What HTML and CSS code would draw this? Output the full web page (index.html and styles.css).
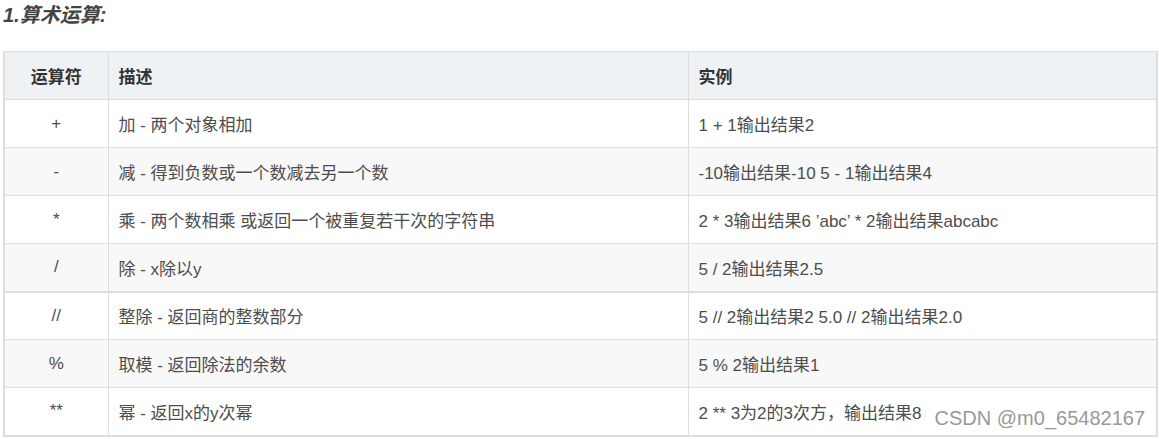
FILE: index.html
```html
<!DOCTYPE html>
<html lang="zh">
<head>
<meta charset="utf-8">
<link rel="stylesheet" href="styles.css">
</head>
<body>
<div class="page">
  <h3 class="title">1.算术运算:</h3>
  <table class="ops">
    <colgroup>
      <col class="c1"><col class="c2"><col class="c3">
    </colgroup>
    <thead>
      <tr><th class="center">运算符</th><th>描述</th><th>实例</th></tr>
    </thead>
    <tbody>
      <tr><td class="center">+</td><td>加 - 两个对象相加</td><td>1 + 1输出结果2</td></tr>
      <tr><td class="center">-</td><td>减 - 得到负数或一个数减去另一个数</td><td>-10输出结果-10 5 - 1输出结果4</td></tr>
      <tr><td class="center">*</td><td>乘 - 两个数相乘 或返回一个被重复若干次的字符串</td><td>2 * 3输出结果6 ’abc’ * 2输出结果abcabc</td></tr>
      <tr class="thick"><td class="center">/</td><td>除 - x除以y</td><td>5 / 2输出结果2.5</td></tr>
      <tr><td class="center">//</td><td>整除 - 返回商的整数部分</td><td>5 // 2输出结果2 5.0 // 2输出结果2.0</td></tr>
      <tr><td class="center">%</td><td>取模 - 返回除法的余数</td><td>5 % 2输出结果1</td></tr>
      <tr><td class="center">**</td><td>幂 - 返回x的y次幂</td><td>2 ** 3为2的3次方，输出结果8</td></tr>
    </tbody>
  </table>
  <div class="watermark">CSDN @m0_65482167</div>
</div>
</body>
</html>
```
FILE: styles.css
```css
html, body {
  margin: 0;
  padding: 0;
  background: #fff;
}
.page {
  position: relative;
  padding: 0 3px 0 3px;
  font-family: "Liberation Sans", "Noto Sans CJK SC", sans-serif;
  color: #4d4d4d;
}
.title {
  margin: 0;
  padding-top: 3px;
  height: 48px;
  font-size: 20px;
  line-height: 24px;
  font-weight: bold;
  font-style: italic;
  color: #444;
}
.ops {
  width: 1153px;
  border-collapse: collapse;
  table-layout: fixed;
  border-left: 2px solid #ddd;
  border-right: 2px solid #ddd;
  border-bottom: 2px solid #ddd;
  font-size: 17px;
}
.c1 { width: 104px; }
.c2 { width: 580px; }
.c3 { width: 469px; }
.ops th, .ops td {
  border: 1px solid #ddd;
  height: 48px;
  padding: 0 10px;
  text-align: left;
  vertical-align: middle;
  box-sizing: border-box;
  white-space: nowrap;
}
.ops th {
  background: #eff2f5;
  font-weight: bold;
  color: #333;
}
.ops tbody tr:nth-child(even) td {
  background: #f8f8f8;
}
.ops .center {
  text-align: center;
}
.ops tr.thick td {
  border-bottom: 2px solid #ddd;
}
.watermark {
  position: absolute;
  right: 14px;
  bottom: 7px;
  font-size: 20px;
  color: #999;
  font-family: "Liberation Sans", sans-serif;
}
```
